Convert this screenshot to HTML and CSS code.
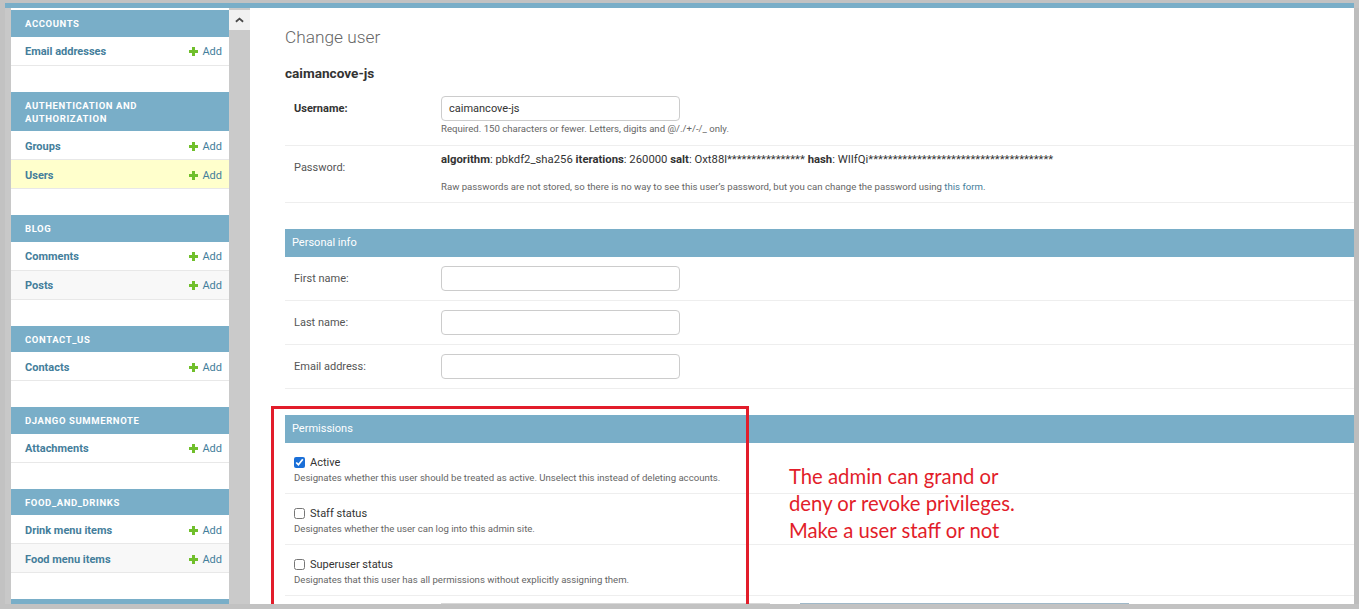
FILE: index.html
```html
<!DOCTYPE html>
<html lang="en">
<head>
<meta charset="utf-8">
<title>Change user | Django site admin</title>
<link rel="stylesheet" href="styles.css">
</head>
<body>
<div class="window">
  <div class="topbar"></div>
  <div class="shell">
    <div class="gutter"></div>
    <nav class="sidebar">
      <div class="module">
        <div class="caption">Accounts</div>
        <div class="navrow"><a class="model">Email addresses</a><a class="addlink"><svg class="plus" viewBox="0 0 9 9"><rect x="3" y="0" width="3" height="9"/><rect x="0" y="3" width="9" height="3"/></svg>Add</a></div>
      </div>
      <div class="module">
        <div class="caption">Authentication and Authorization</div>
        <div class="navrow"><a class="model">Groups</a><a class="addlink"><svg class="plus" viewBox="0 0 9 9"><rect x="3" y="0" width="3" height="9"/><rect x="0" y="3" width="9" height="3"/></svg>Add</a></div>
        <div class="navrow current"><a class="model">Users</a><a class="addlink"><svg class="plus" viewBox="0 0 9 9"><rect x="3" y="0" width="3" height="9"/><rect x="0" y="3" width="9" height="3"/></svg>Add</a></div>
      </div>
      <div class="module">
        <div class="caption">Blog</div>
        <div class="navrow"><a class="model">Comments</a><a class="addlink"><svg class="plus" viewBox="0 0 9 9"><rect x="3" y="0" width="3" height="9"/><rect x="0" y="3" width="9" height="3"/></svg>Add</a></div>
        <div class="navrow alt"><a class="model">Posts</a><a class="addlink"><svg class="plus" viewBox="0 0 9 9"><rect x="3" y="0" width="3" height="9"/><rect x="0" y="3" width="9" height="3"/></svg>Add</a></div>
      </div>
      <div class="module">
        <div class="caption">Contact_us</div>
        <div class="navrow"><a class="model">Contacts</a><a class="addlink"><svg class="plus" viewBox="0 0 9 9"><rect x="3" y="0" width="3" height="9"/><rect x="0" y="3" width="9" height="3"/></svg>Add</a></div>
      </div>
      <div class="module">
        <div class="caption">Django Summernote</div>
        <div class="navrow"><a class="model">Attachments</a><a class="addlink"><svg class="plus" viewBox="0 0 9 9"><rect x="3" y="0" width="3" height="9"/><rect x="0" y="3" width="9" height="3"/></svg>Add</a></div>
      </div>
      <div class="module">
        <div class="caption">Food_and_drinks</div>
        <div class="navrow"><a class="model">Drink menu items</a><a class="addlink"><svg class="plus" viewBox="0 0 9 9"><rect x="3" y="0" width="3" height="9"/><rect x="0" y="3" width="9" height="3"/></svg>Add</a></div>
        <div class="navrow alt"><a class="model">Food menu items</a><a class="addlink"><svg class="plus" viewBox="0 0 9 9"><rect x="3" y="0" width="3" height="9"/><rect x="0" y="3" width="9" height="3"/></svg>Add</a></div>
      </div>
      <div class="module">
        <div class="caption empty"></div>
      </div>
    </nav>
    <div class="scrollbar">
      <div class="scroll-btn"><svg viewBox="0 0 10 6" class="chev"><polyline points="1,5 5,1.5 9,5"/></svg></div>
    </div>
    <main class="main">
      <h1 class="title">Change user</h1>
      <h2 class="objname">caimancove-js</h2>

      <div class="fieldset">
        <div class="row">
          <label class="lbl required">Username:</label>
          <div class="field">
            <div class="input">caimancove-js</div>
            <div class="help">Required. 150 characters or fewer. Letters, digits and @/./+/-/_ only.</div>
          </div>
        </div>
        <div class="row pw">
          <label class="lbl pwlbl">Password:</label>
          <div class="field">
            <div class="hashline"><b>algorithm</b>: pbkdf2_sha256 <b>iterations</b>: 260000 <b>salt</b>: Oxt88l**************** <b>hash</b>: WIIfQi**************************************</div>
            <div class="help pwhelp">Raw passwords are not stored, so there is no way to see this user’s password, but you can change the password using <a class="link">this form</a>.</div>
          </div>
        </div>
      </div>

      <div class="fieldset">
        <div class="fs-head">Personal info</div>
        <div class="row">
          <label class="lbl">First name:</label>
          <div class="field"><div class="input"></div></div>
        </div>
        <div class="row">
          <label class="lbl">Last name:</label>
          <div class="field"><div class="input"></div></div>
        </div>
        <div class="row">
          <label class="lbl">Email address:</label>
          <div class="field"><div class="input"></div></div>
        </div>
      </div>

      <div class="fieldset">
        <div class="fs-head">Permissions</div>
        <div class="crow">
          <div class="check"><input type="checkbox" checked><span>Active</span></div>
          <div class="help">Designates whether this user should be treated as active. Unselect this instead of deleting accounts.</div>
        </div>
        <div class="crow">
          <div class="check"><input type="checkbox"><span>Staff status</span></div>
          <div class="help">Designates whether the user can log into this admin site.</div>
        </div>
        <div class="crow">
          <div class="check"><input type="checkbox"><span>Superuser status</span></div>
          <div class="help">Designates that this user has all permissions without explicitly assigning them.</div>
        </div>
        <div class="filterrow">
          <div class="selbox"></div>
          <div class="selbox chosen"></div>
        </div>
      </div>

      <div class="redbox"></div>
      <div class="note">The admin can grand or<br>deny or revoke privileges.<br>Make a user staff or not</div>
    </main>
    <div class="rightedge"></div>
  </div>
</div>
</body>
</html>
```

FILE: styles.css
```css
html, body {
  margin: 0;
  padding: 0;
}
body {
  background: #c2c2c2;
  font-family: Roboto, "Liberation Sans", Arial, sans-serif;
  color: #333;
  height: 609px;
  overflow: hidden;
}
.window {
  margin: 3px 0 0 5px;
  width: 1354px;
}
.topbar {
  height: 5px;
  margin-right: 5px;
  background: #79aec8;
}
.shell {
  display: flex;
  height: 596px;
  overflow: hidden;
}
.gutter {
  width: 6px;
  flex: none;
  background: #c8c8c8;
}
.sidebar {
  width: 218px;
  flex: none;
  background: #fff;
  padding-top: 2px;
  overflow: hidden;
}
.module {
  margin-bottom: 26px;
}
.caption {
  background: #79aec8;
  color: #fff;
  font-size: 9.5px;
  font-weight: 700;
  letter-spacing: 0.6px;
  text-transform: uppercase;
  line-height: 13px;
  padding: 7px 14px 6.5px;
}
.caption.empty {
  height: 13px;
}
.navrow {
  display: flex;
  justify-content: space-between;
  align-items: center;
  height: 26px;
  padding: 2px 7px 0 14px;
  border-bottom: 1px solid #e8e8e8;
  font-size: 11px;
}
.navrow.alt {
  background: #f8f8f8;
}
.navrow.current {
  background: #ffffcc;
}
.model {
  color: #447e9b;
  font-weight: 700;
}
.addlink {
  display: flex;
  align-items: center;
  gap: 4px;
  color: #447e9b;
}
.plus {
  width: 9px;
  height: 9px;
  fill: #70bf2b;
}
.scrollbar {
  width: 21px;
  flex: none;
  background: #cacaca;
  padding-top: 2px;
}
.scroll-btn {
  height: 20px;
  background: #f1f1f1;
  display: flex;
  align-items: center;
  justify-content: center;
}
.chev {
  width: 9px;
  height: 6px;
  fill: none;
  stroke: #4a4a4a;
  stroke-width: 2;
}
.main {
  flex: 1;
  background: #fff;
  position: relative;
  padding-left: 35px;
  overflow: hidden;
}
.rightedge {
  width: 5px;
  flex: none;
  background: #bdbdbd;
}
.title {
  margin: 19px 0 0;
  font-size: 17.3px;
  font-weight: 300;
  line-height: 20px;
  color: #666;
}
.objname {
  margin: 17px 0 5px;
  font-size: 13.6px;
  font-weight: 700;
  line-height: 18px;
  color: #333;
}
.fieldset {
  margin-bottom: 26px;
}
.fs-head {
  height: 28px;
  line-height: 28px;
  background: #79aec8;
  color: #fff;
  font-size: 11px;
  padding-left: 7px;
}
.row {
  display: flex;
  padding: 9px 0 9px 9px;
  border-bottom: 1px solid #eee;
}
.lbl {
  width: 147px;
  flex: none;
  font-size: 11px;
  line-height: 25px;
  color: #555;
}
.lbl.required {
  font-weight: 700;
  color: #333;
}
.input {
  box-sizing: border-box;
  width: 239px;
  height: 25px;
  border: 1px solid #ccc;
  border-radius: 4px;
  font-size: 11px;
  line-height: 23px;
  padding-left: 7px;
  color: #333;
}
.help {
  font-size: 9.6px;
  line-height: 14px;
  color: #666;
  margin-top: 1px;
}
.row.pw {
  padding: 7px 0 8px 9px;
}
.pwlbl {
  line-height: 14px;
  padding-top: 8px;
}
.hashline {
  font-size: 11.3px;
  line-height: 14px;
  color: #333;
  white-space: nowrap;
}
.hashline b {
  font-weight: 700;
}
.pwhelp {
  margin-top: 13px;
}
.link {
  color: #447e9b;
}
.crow {
  padding: 11px 0 9px 9px;
  border-bottom: 1px solid #eee;
}
.check {
  display: flex;
  align-items: center;
  gap: 5px;
  height: 16px;
  font-size: 11px;
  color: #333;
}
.check input {
  width: 11px;
  height: 11px;
  margin: 0;
  accent-color: #1a6fd8;
}
.crow .help {
  margin-top: 2px;
  line-height: 12px;
}
.filterrow {
  display: flex;
  padding: 7px 0 0 156px;
  gap: 30px;
}
.selbox {
  width: 329px;
  height: 20px;
  border-top: 2px solid #d8d8d8;
}
.selbox.chosen {
  border-top-color: #9fb8c8;
}
.redbox {
  position: absolute;
  left: 21px;
  top: 398px;
  width: 472px;
  height: 196px;
  border: 3px solid #e21d2a;
}
.note {
  position: absolute;
  left: 539px;
  top: 455px;
  font-family: Lato, "Noto Sans", sans-serif;
  font-size: 20.3px;
  line-height: 27px;
  color: #e21d2a;
}
```
